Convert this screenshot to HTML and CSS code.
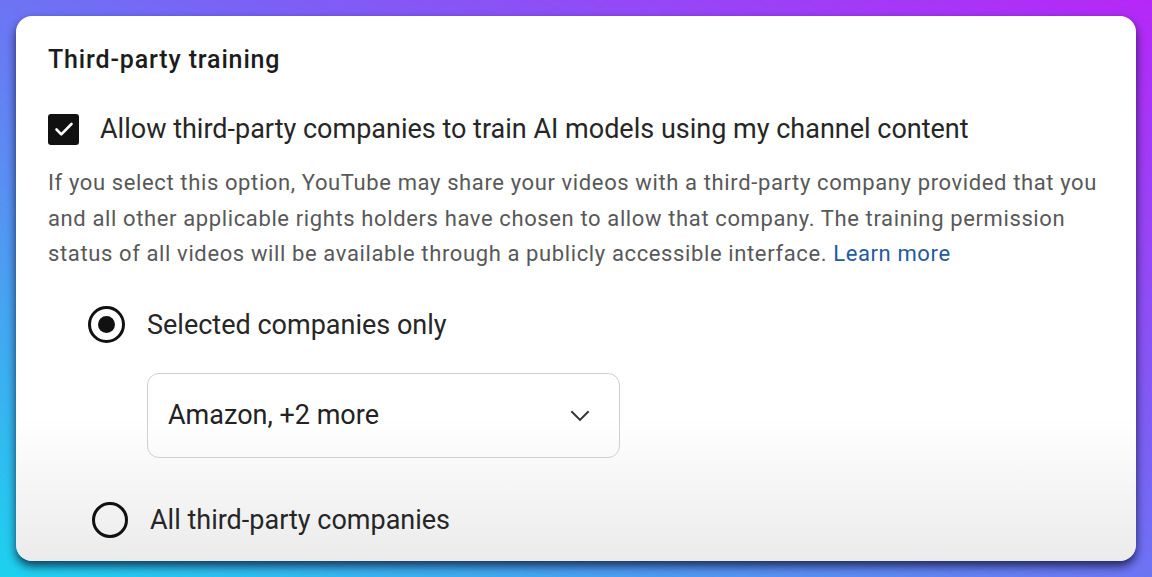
FILE: index.html
```html
<!DOCTYPE html>
<html>
<head>
    <title>Third-party training</title>
    <meta charset="UTF-8">
    <meta name="viewport" content="width=device-width, initial-scale=1.0">
    <link rel="stylesheet" href="styles.css">
</head>
<body>
    <div class="card">
        <h2 class="title">Third-party training</h2>

        <label class="check-row">
            <span class="checkbox">
                <svg viewBox="0 0 24 24" width="24" height="24">
                    <path d="M4.5 12.5l4.8 4.8L19.5 7" fill="none" stroke="#fff" stroke-width="2.6" stroke-linecap="round" stroke-linejoin="round"/>
                </svg>
            </span>
            <span class="check-label">Allow third-party companies to train AI models using my channel content</span>
        </label>

        <p class="desc">
            If you select this option, YouTube may share your videos with a third-party company provided that you<br>
            and all other applicable rights holders have chosen to allow that company. The training permission<br>
            status of all videos will be available through a publicly accessible interface. <a href="#" class="link">Learn more</a>
        </p>

        <div class="options">
            <label class="radio-row">
                <span class="radio checked"></span>
                <span class="radio-label">Selected companies only</span>
            </label>

            <div class="select">
                <span>Amazon, +2 more</span>
                <svg viewBox="0 0 24 24" width="26" height="26">
                    <path d="M4 8.5l8 8 8-8" fill="none" stroke="#333" stroke-width="1.8"/>
                </svg>
            </div>

            <label class="radio-row second">
                <span class="radio"></span>
                <span class="radio-label">All third-party companies</span>
            </label>
        </div>
    </div>
</body>
</html>
```

FILE: styles.css
```css
* {
    box-sizing: border-box;
}

html, body {
    height: 100%;
}

body {
    margin: 0;
    padding: 16px;
    font-family: Roboto, 'Noto Sans', sans-serif;
    background: linear-gradient(to top right, #1cd2ee 0%, #5a8ef2 35%, #7a62f5 60%, #b627f7 100%);
    overflow: hidden;
}

.card {
    width: 1120px;
    height: 545px;
    border-radius: 16px;
    background: linear-gradient(to bottom, #ffffff 74%, #ebebeb 100%);
    box-shadow: 0 5px 10px rgba(8, 12, 40, 0.75);
    padding: 26px 32px 0 32px;
    color: #222;
}

.title {
    margin: 0;
    font-size: 25px;
    font-weight: 500;
    letter-spacing: 0.85px;
    line-height: 36px;
    color: #1c1c1c;
}

.check-row {
    display: flex;
    align-items: center;
    gap: 21px;
    margin-top: 33px;
    height: 36px;
}

.checkbox {
    width: 31px;
    height: 31px;
    border-radius: 3px;
    background: #111;
    display: flex;
    align-items: center;
    justify-content: center;
}

.check-label {
    font-size: 27px;
    color: #262626;
}

.desc {
    margin: 18px 0 0 0;
    font-size: 22px;
    letter-spacing: 0.62px;
    line-height: 35.5px;
    color: #585858;
    white-space: nowrap;
}

.link {
    color: #245a9c;
    text-decoration: none;
}

.options {
    margin-top: 33px;
    padding-left: 40px;
}

.radio-row {
    display: flex;
    align-items: center;
    gap: 22px;
    height: 40px;
}

.radio-row.second {
    margin-top: 42px;
    padding-left: 4px;
}

.radio {
    width: 37px;
    height: 37px;
    border: 3px solid #111;
    border-radius: 50%;
    display: flex;
    align-items: center;
    justify-content: center;
}

.radio-row.second .radio {
    width: 36px;
    height: 36px;
}

.radio.checked::after {
    content: '';
    width: 17px;
    height: 17px;
    border-radius: 50%;
    background: #111;
}

.radio-label {
    font-size: 27px;
    color: #262626;
}

.select {
    margin: 28px 0 0 59px;
    width: 473px;
    height: 85px;
    border: 1.5px solid #cfcfcf;
    border-radius: 12px;
    display: flex;
    align-items: center;
    justify-content: space-between;
    padding: 0 26px 0 20px;
    font-size: 27px;
    color: #222;
}
```
